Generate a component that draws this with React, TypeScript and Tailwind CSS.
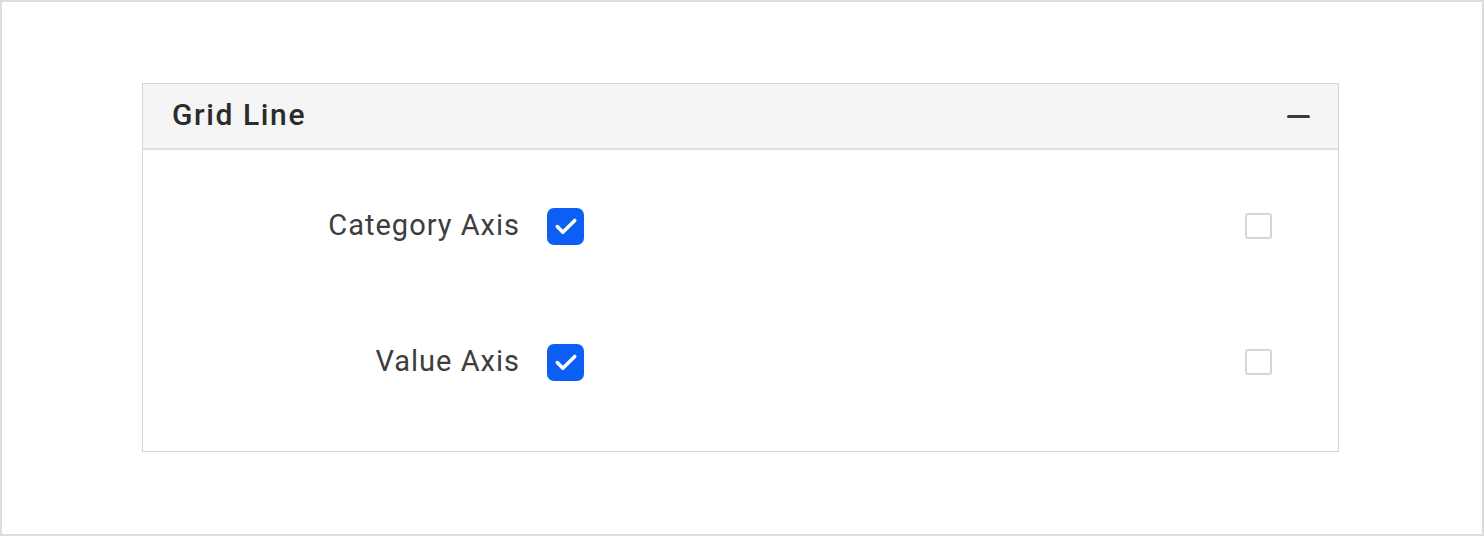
function Checked() {
  return (
    <div className="w-[37px] h-[37px] rounded-[7px] bg-[#0d5ef5] flex items-center justify-center">
      <svg width="28" height="28" viewBox="0 0 24 24" fill="none">
        <path d="M4.5 12.5l4.8 4.8L19.5 7.2" stroke="white" strokeWidth="3" strokeLinecap="round" strokeLinejoin="round" />
      </svg>
    </div>
  );
}

function Unchecked() {
  return <div className="w-[27px] h-[26px] rounded-[3px] border-2 border-[#d6d6d6] bg-white" />;
}

function Row({ label }: { label: string }) {
  return (
    <div className="h-[136px] flex items-center">
      <div className="w-[404px] text-right text-[29px] tracking-[1px] text-[#3d3d3d] pr-[27px]">{label}</div>
      <Checked />
      <div className="flex-1" />
      <div className="mr-[66px]">
        <Unchecked />
      </div>
    </div>
  );
}

export default function App() {
  return (
    <div className="w-[1484px] h-[536px] border-2 border-[#dcdcdc] bg-white pl-[140px] pt-[81px]" style={{ fontFamily: "Roboto, 'Liberation Sans', sans-serif" }}>
      <div className="w-[1197px] h-[369px] border border-[#d6d6d6] flex flex-col">
        {/* header */}
        <div className="h-[66px] bg-[#f5f5f5] border-b-2 border-[#e0e0e0] flex items-center justify-between pl-[29px] pr-[28px]">
          <span className="text-[30px] leading-none pb-[2px] font-medium tracking-[1.6px] text-[#2b2b2b]">Grid Line</span>
          <div className="w-[23px] h-[3px] rounded-full bg-[#3a3a3a]" />
        </div>
        {/* body */}
        <div className="flex-1 pt-[8px] flex flex-col">
          <Row label="Category Axis" />
          <Row label="Value Axis" />
        </div>
      </div>
    </div>
  );
}
